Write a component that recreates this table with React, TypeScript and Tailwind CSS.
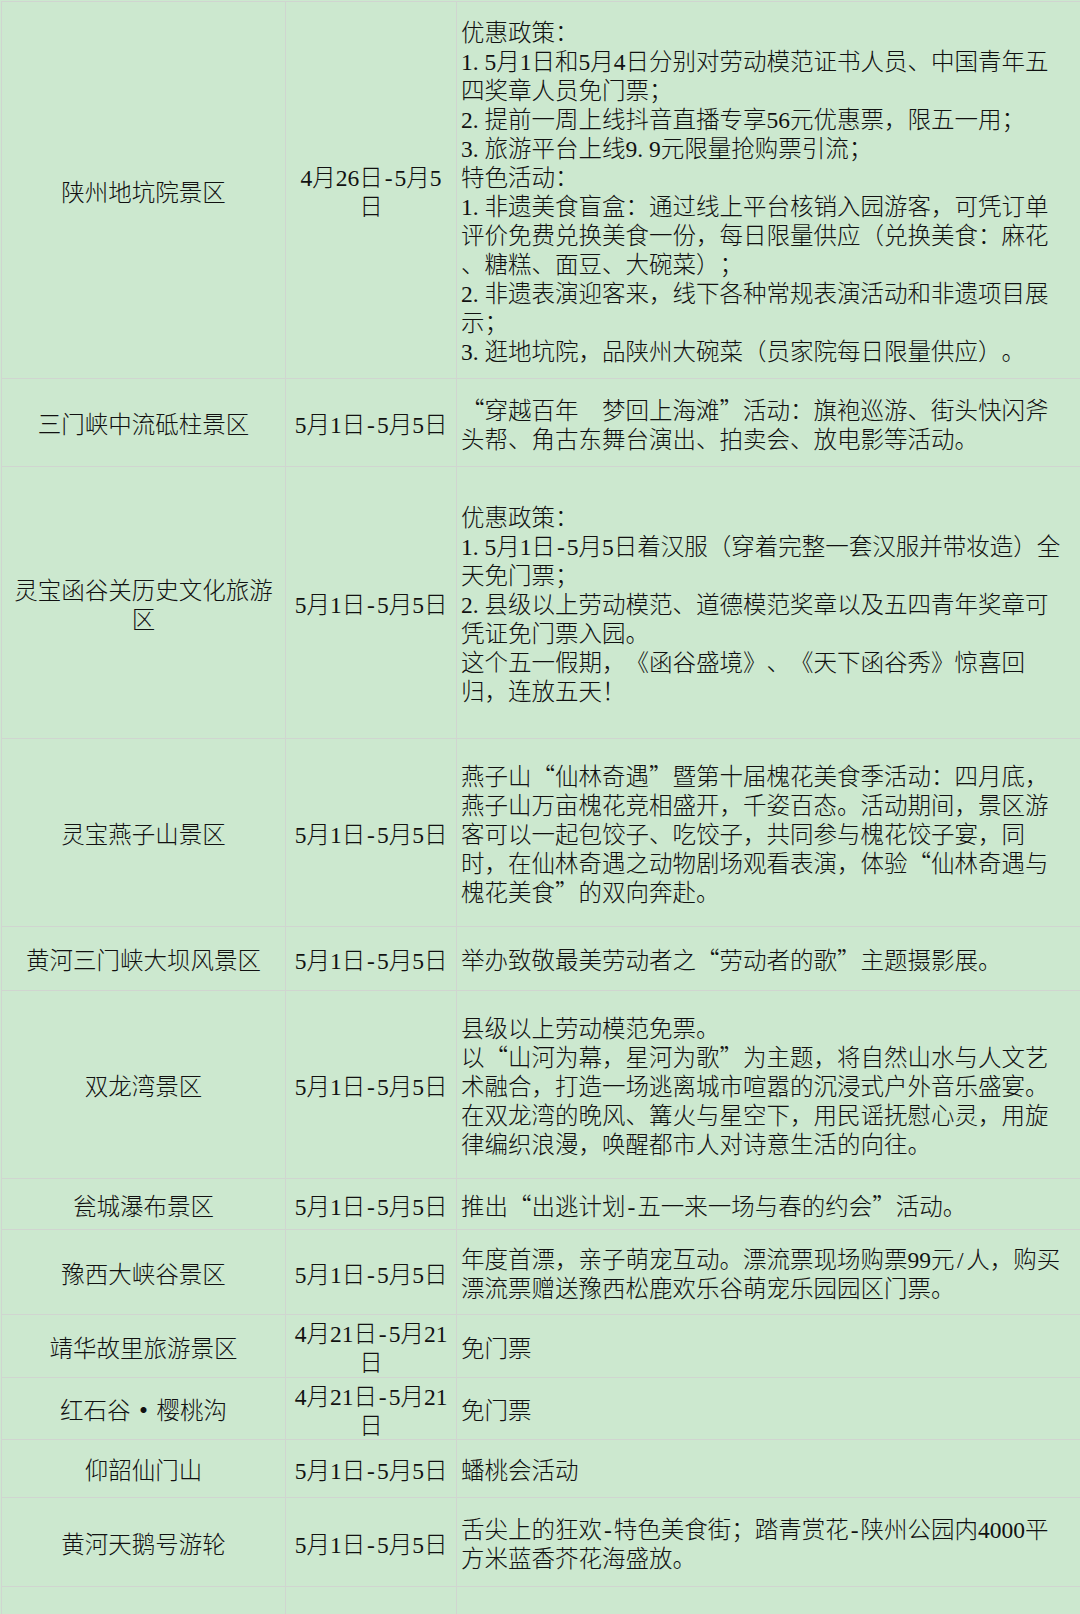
import React from 'react'

type Row = {
  name: string[]
  date: string[]
  lines: string[]
  h: string
}

const rows: Row[] = [
  {
    name: ['陕州地坑院景区'],
    date: ['4月26日-5月5', '日'],
    h: 'h-[377px]',
    lines: [
      '优惠政策：',
      '1.5月1日和5月4日分别对劳动模范证书人员、中国青年五',
      '四奖章人员免门票；',
      '2.提前一周上线抖音直播专享56元优惠票，限五一用；',
      '3.旅游平台上线9.9元限量抢购票引流；',
      '特色活动：',
      '1.非遗美食盲盒：通过线上平台核销入园游客，可凭订单',
      '评价免费兑换美食一份，每日限量供应（兑换美食：麻花',
      '、糖糕、面豆、大碗菜）；',
      '2.非遗表演迎客来，线下各种常规表演活动和非遗项目展',
      '示；',
      '3.逛地坑院，品陕州大碗菜（员家院每日限量供应）。',
    ],
  },
  {
    name: ['三门峡中流砥柱景区'],
    date: ['5月1日-5月5日'],
    h: 'h-[88px]',
    lines: ['“穿越百年　梦回上海滩”活动：旗袍巡游、街头快闪斧', '头帮、角古东舞台演出、拍卖会、放电影等活动。'],
  },
  {
    name: ['灵宝函谷关历史文化旅游', '区'],
    date: ['5月1日-5月5日'],
    h: 'h-[272px]',
    lines: [
      '优惠政策：',
      '1.5月1日-5月5日着汉服（穿着完整一套汉服并带妆造）全',
      '天免门票；',
      '2.县级以上劳动模范、道德模范奖章以及五四青年奖章可',
      '凭证免门票入园。',
      '这个五一假期，《函谷盛境》、《天下函谷秀》惊喜回',
      '归，连放五天！',
    ],
  },
  {
    name: ['灵宝燕子山景区'],
    date: ['5月1日-5月5日'],
    h: 'h-[188px]',
    lines: [
      '燕子山“仙林奇遇”暨第十届槐花美食季活动：四月底，',
      '燕子山万亩槐花竞相盛开，千姿百态。活动期间，景区游',
      '客可以一起包饺子、吃饺子，共同参与槐花饺子宴，同',
      '时，在仙林奇遇之动物剧场观看表演，体验“仙林奇遇与',
      '槐花美食”的双向奔赴。',
    ],
  },
  {
    name: ['黄河三门峡大坝风景区'],
    date: ['5月1日-5月5日'],
    h: 'h-[64px]',
    lines: ['举办致敬最美劳动者之“劳动者的歌”主题摄影展。'],
  },
  {
    name: ['双龙湾景区'],
    date: ['5月1日-5月5日'],
    h: 'h-[188px]',
    lines: [
      '县级以上劳动模范免票。',
      '以“山河为幕，星河为歌”为主题，将自然山水与人文艺',
      '术融合，打造一场逃离城市喧嚣的沉浸式户外音乐盛宴。',
      '在双龙湾的晚风、篝火与星空下，用民谣抚慰心灵，用旋',
      '律编织浪漫，唤醒都市人对诗意生活的向往。',
    ],
  },
  {
    name: ['瓮城瀑布景区'],
    date: ['5月1日-5月5日'],
    h: 'h-[51px]',
    lines: ['推出“出逃计划-五一来一场与春的约会”活动。'],
  },
  {
    name: ['豫西大峡谷景区'],
    date: ['5月1日-5月5日'],
    h: 'h-[85px]',
    lines: ['年度首漂，亲子萌宠互动。漂流票现场购票99元/人，购买', '漂流票赠送豫西松鹿欢乐谷萌宠乐园园区门票。'],
  },
  {
    name: ['靖华故里旅游景区'],
    date: ['4月21日-5月21', '日'],
    h: 'h-[63px]',
    lines: ['免门票'],
  },
  {
    name: ['红石谷·樱桃沟'],
    date: ['4月21日-5月21', '日'],
    h: 'h-[62px]',
    lines: ['免门票'],
  },
  {
    name: ['仰韶仙门山'],
    date: ['5月1日-5月5日'],
    h: 'h-[58px]',
    lines: ['蟠桃会活动'],
  },
  {
    name: ['黄河天鹅号游轮'],
    date: ['5月1日-5月5日'],
    h: 'h-[89px]',
    lines: ['舌尖上的狂欢-特色美食街；踏青赏花-陕州公园内4000平', '方米蓝香芥花海盛放。'],
  },
  {
    name: [],
    date: [],
    h: 'h-[60px]',
    lines: [],
  },
]

// half-width chars sit in fixed half-em boxes, like the sheet's song font
function T({ s }: { s: string }) {
  const out: React.ReactNode[] = []
  let buf = ''
  Array.from(s).forEach((c, i) => {
    if (/[\x21-\x7e]/.test(c)) {
      if (buf) out.push(buf)
      buf = ''
      out.push(
        <span
          key={i}
          className={`inline-block w-[0.5em] font-['Liberation_Serif'] ${c === '.' ? 'text-left' : 'text-center'}`}
        >
          {c}
        </span>
      )
    } else if (c === '·') {
      if (buf) out.push(buf)
      buf = ''
      out.push(
        <span key={i} className="inline-block w-[1.1em] text-center font-bold">
          ·
        </span>
      )
    } else {
      buf += c
    }
  })
  if (buf) out.push(buf)
  return <>{out}</>
}

function Line({ s }: { s: string }) {
  return (
    <div className="h-[29px] whitespace-nowrap">
      <T s={s} />
    </div>
  )
}

export default function App() {
  return (
    <div className="h-[1614px] w-[1080px] overflow-hidden bg-[#cce8cf] pl-[1px] pt-[1px]">
      <div className="border-l border-t border-[#d0d5d0] font-['Noto_Sans_CJK_SC',sans-serif] text-[23.5px] leading-[29px] font-light text-[#111] [text-spacing-trim:space-all]">
        {rows.map((r, i) => (
          <div key={i} className={`flex border-b border-[#d0d5d0] ${r.h}`}>
            <div className="flex w-[284px] shrink-0 flex-col items-center justify-center border-r border-[#d0d5d0] pt-[2px] text-center">
              {r.name.map((n, j) => (
                <Line key={j} s={n} />
              ))}
            </div>
            <div className="flex w-[171px] shrink-0 flex-col items-center justify-center border-r border-[#d0d5d0] pt-[2px] text-center">
              {r.date.map((d, j) => (
                <Line key={j} s={d} />
              ))}
            </div>
            <div className="flex flex-1 flex-col justify-center pl-[4px] pt-[2px]">
              {r.lines.map((l, j) => (
                <Line key={j} s={l} />
              ))}
            </div>
          </div>
        ))}
      </div>
    </div>
  )
}
